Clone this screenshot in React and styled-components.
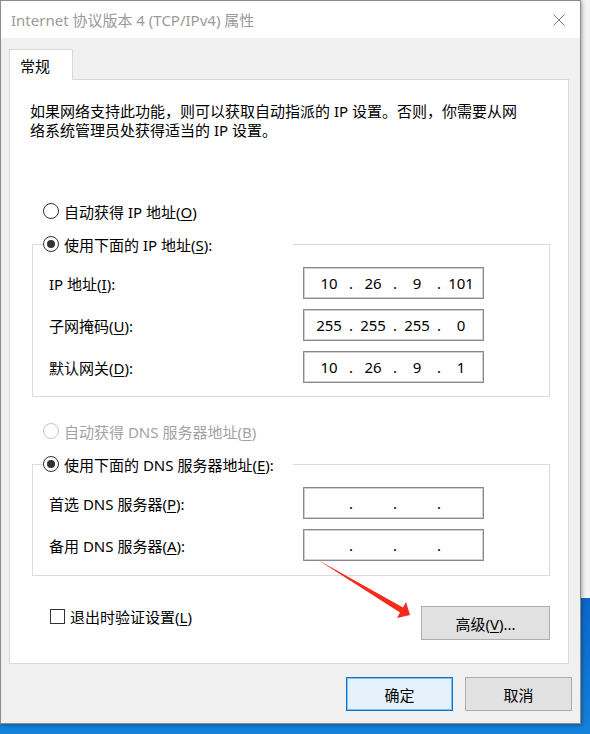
import styled, { createGlobalStyle } from 'styled-components';

const GlobalStyle = createGlobalStyle`
  html, body {
    margin: 0;
    padding: 0;
  }
  body {
    width: 590px;
    height: 734px;
    overflow: hidden;
    background: linear-gradient(to bottom, #f3f3f3 0, #f3f3f3 598px, #0b66ca 598px, #1482da 734px);
    font-family: "Noto Sans", "Noto Sans CJK SC", sans-serif;
    color: #000;
  }
  * {
    box-sizing: border-box;
  }
`;

const Page = styled.div`
  position: relative;
  width: 590px;
  height: 734px;
`;

const Dialog = styled.div`
  width: 581px;
  height: 724px;
  background: #f0f0f0;
  border: 1px solid #8c8c8c;
  box-shadow: 1px 1px 4px rgba(0, 0, 0, 0.35);
  display: flex;
  flex-direction: column;
`;

const TitleBar = styled.div`
  height: 37px;
  background: #fff;
  display: flex;
  align-items: center;
  justify-content: space-between;
  padding-left: 10px;
`;

const Title = styled.span`
  font-size: 15px;
  color: #9a9a9a;
  white-space: nowrap;
`;

const CloseButton = styled.div`
  width: 42px;
  height: 37px;
  display: flex;
  align-items: center;
  justify-content: center;
`;

const Body = styled.div`
  flex: 1;
  padding: 11px 8px 0 8px;
  display: flex;
  flex-direction: column;
`;

const TabStrip = styled.div`
  display: flex;
`;

const Tab = styled.div`
  position: relative;
  z-index: 1;
  width: 64px;
  height: 31px;
  margin-bottom: -1px;
  padding-left: 10px;
  display: flex;
  align-items: center;
  background: #fff;
  border: 1px solid #d9d9d9;
  border-bottom: none;
  font-size: 15px;
`;

const Panel = styled.div`
  width: 560px;
  height: 585px;
  background: #fff;
  border: 1px solid #d9d9d9;
  padding: 0 18px 0 20px;
  display: flex;
  flex-direction: column;
`;

const Description = styled.p`
  margin: 22px 0 0 0;
  font-size: 15px;
  line-height: 19px;
  white-space: nowrap;
`;

const RadioRow = styled.label`
  height: 20px;
  display: flex;
  align-items: center;
  gap: 5px;
  margin-top: ${({ $top }) => $top || 0}px;
  margin-left: ${({ $indent }) => ($indent ? 13 : 0)}px;
  font-size: 15px;
  white-space: nowrap;
  color: ${({ $disabled }) => ($disabled ? '#a3a3a3' : '#000')};
`;

const RadioCircle = styled.span`
  width: 16px;
  height: 16px;
  flex: none;
  border-radius: 50%;
  border: 1px solid ${({ $disabled }) => ($disabled ? '#c4c4c4' : '#333')};
  background: #fff;
  display: flex;
  align-items: center;
  justify-content: center;

  &::after {
    content: '';
    width: 8px;
    height: 8px;
    border-radius: 50%;
    background: ${({ $checked }) => ($checked ? '#333' : 'transparent')};
  }
`;

const Key = styled.u`
  text-underline-offset: 2px;
`;

const GroupBox = styled.fieldset`
  width: 518px;
  margin: 13px 0 0 2px;
  padding: 0;
  border: 1px solid #dcdcdc;
  min-width: 0;
`;

const GroupLegend = styled.legend`
  width: 250px;
  padding: 0;
  margin-left: 10px;
`;

const Rows = styled.div`
  display: grid;
  grid-template-columns: 254px 181px;
  row-gap: 10px;
  align-items: center;
  padding: 13px 0 ${({ $bottom }) => $bottom}px 16px;
`;

const FieldLabel = styled.span`
  font-size: 15px;
  white-space: nowrap;
`;

const IpBox = styled.div`
  width: 181px;
  height: 32px;
  border: 1px solid #8a8a8a;
  box-shadow: inset 0 0 0 1px #cfcfcf;
  background: #fff;
  display: flex;
  align-items: center;
  padding-left: 7px;
  font-size: 15px;
`;

const Octet = styled.span`
  width: 36px;
  text-align: center;
`;

const Dot = styled.span`
  width: 8px;
  text-align: center;
`;

const BottomRow = styled.div`
  width: 520px;
  height: 34px;
  margin-top: 30px;
  padding-left: 20px;
  display: flex;
  justify-content: space-between;
  align-items: flex-start;
`;

const CheckRow = styled.label`
  display: flex;
  align-items: center;
  gap: 5px;
  font-size: 15px;
  white-space: nowrap;
`;

const CheckBox = styled.span`
  width: 15px;
  height: 15px;
  border: 1.5px solid #333;
  background: #fff;
`;

const Button = styled.button`
  width: ${({ $w }) => $w}px;
  height: 34px;
  padding: 0;
  font-family: inherit;
  font-size: 15px;
  color: #000;
  background: ${({ $primary }) => ($primary ? '#e5f1fb' : '#e1e1e1')};
  border: 1px solid ${({ $primary }) => ($primary ? '#0078d7' : '#adadad')};
  box-shadow: ${({ $primary }) => ($primary ? 'inset 0 0 0 1px #8cbde8' : 'none')};
`;

const Footer = styled.div`
  margin-top: 13px;
  display: flex;
  justify-content: flex-end;
  gap: 12px;
`;

const Arrow = styled.svg`
  position: absolute;
  left: 0;
  top: 0;
  pointer-events: none;
`;

const Radio = ({ checked, disabled, children, ...rest }) => (
  <RadioRow $disabled={disabled} {...rest}>
    <RadioCircle $checked={checked} $disabled={disabled} />
    <span>{children}</span>
  </RadioRow>
);

const IpField = ({ parts = ['', '', '', ''] }) => (
  <IpBox>
    <Octet>{parts[0]}</Octet>
    <Dot>.</Dot>
    <Octet>{parts[1]}</Octet>
    <Dot>.</Dot>
    <Octet>{parts[2]}</Octet>
    <Dot>.</Dot>
    <Octet>{parts[3]}</Octet>
  </IpBox>
);

export default function App() {
  return (
    <Page>
      <GlobalStyle />
      <Dialog>
        <TitleBar>
          <Title>Internet 协议版本 4 (TCP/IPv4) 属性</Title>
          <CloseButton>
            <svg width="12" height="12" viewBox="0 0 12 12">
              <path d="M0.5 0.5 L11.5 11.5 M11.5 0.5 L0.5 11.5" stroke="#7a7a7a" strokeWidth="1" />
            </svg>
          </CloseButton>
        </TitleBar>
        <Body>
          <TabStrip>
            <Tab>常规</Tab>
          </TabStrip>
          <Panel>
            <Description>
              如果网络支持此功能，则可以获取自动指派的 IP 设置。否则，你需要从网
              <br />
              络系统管理员处获得适当的 IP 设置。
            </Description>

            <Radio $indent $top={61}>
              自动获得 IP 地址(<Key>O</Key>)
            </Radio>

            <GroupBox>
              <GroupLegend>
                <Radio checked>
                  使用下面的 IP 地址(<Key>S</Key>):
                </Radio>
              </GroupLegend>
              <Rows $bottom={13}>
                <FieldLabel>IP 地址(<Key>I</Key>):</FieldLabel>
                <IpField parts={['10', '26', '9', '101']} />
                <FieldLabel>子网掩码(<Key>U</Key>):</FieldLabel>
                <IpField parts={['255', '255', '255', '0']} />
                <FieldLabel>默认网关(<Key>D</Key>):</FieldLabel>
                <IpField parts={['10', '26', '9', '1']} />
              </Rows>
            </GroupBox>

            <Radio $indent $top={24} disabled>
              自动获得 DNS 服务器地址(<Key>B</Key>)
            </Radio>

            <GroupBox>
              <GroupLegend>
                <Radio checked>
                  使用下面的 DNS 服务器地址(<Key>E</Key>):
                </Radio>
              </GroupLegend>
              <Rows $bottom={14}>
                <FieldLabel>首选 DNS 服务器(<Key>P</Key>):</FieldLabel>
                <IpField />
                <FieldLabel>备用 DNS 服务器(<Key>A</Key>):</FieldLabel>
                <IpField />
              </Rows>
            </GroupBox>

            <BottomRow>
              <CheckRow>
                <CheckBox />
                <span>退出时验证设置(<Key>L</Key>)</span>
              </CheckRow>
              <Button $w={129}>
                高级(<Key>V</Key>)...
              </Button>
            </BottomRow>
          </Panel>
          <Footer>
            <Button $w={107} $primary>确定</Button>
            <Button $w={107}>取消</Button>
          </Footer>
        </Body>
      </Dialog>
      <Arrow width="590" height="734" viewBox="0 0 590 734">
        <polygon
          points="318,560 400,612.6 397,618 410,615 406,602 403,607.4"
          fill="#f52a1c"
        />
      </Arrow>
    </Page>
  );
}
